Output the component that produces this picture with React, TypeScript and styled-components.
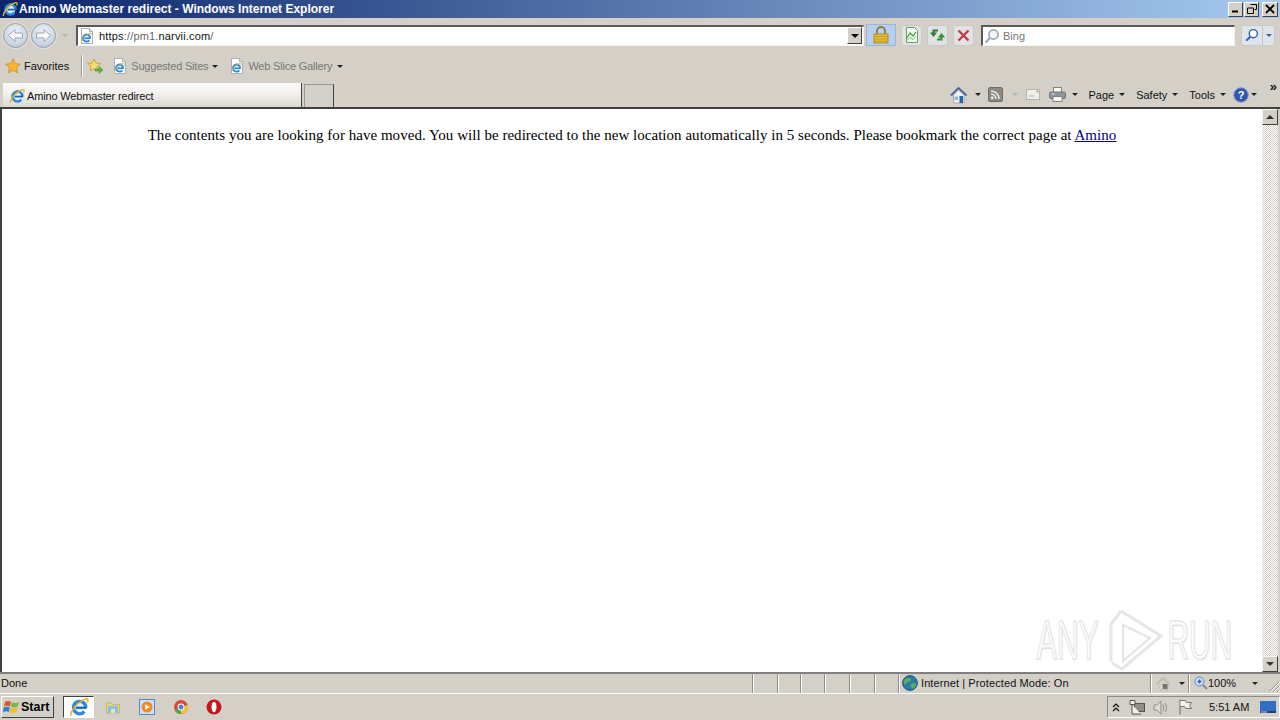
import React from 'react';
import styled, { createGlobalStyle } from 'styled-components';

const GlobalStyle = createGlobalStyle`
  html, body {
    margin: 0;
    padding: 0;
    overflow: hidden;
    background: #d4d0c8;
  }
`;

const UI_FONT = `"Liberation Sans", Arial, sans-serif`;

const Screen = styled.div`
  width: 1280px;
  height: 720px;
  position: relative;
  overflow: hidden;
  display: flex;
  flex-direction: column;
  background: #d4d0c8;
  font-family: ${UI_FONT};
  font-size: 11px;
  color: #111;
`;

const TitleBar = styled.div`
  height: 18px;
  flex: none;
  display: flex;
  align-items: center;
  padding: 0 2px;
  gap: 1px;
  background: linear-gradient(90deg, #0a246a 0%, #a6caf0 100%);
`;

const TitleText = styled.div`
  flex: 1;
  color: #fff;
  font-weight: bold;
  font-size: 12px;
  white-space: nowrap;
`;

const WinControls = styled.div`
  display: flex;
`;

const WinButton = styled.div<{ $w?: number; $gap?: number }>`
  width: ${(p) => p.$w ?? 15}px;
  height: 15px;
  margin-left: ${(p) => p.$gap ?? 0}px;
  box-sizing: border-box;
  background: #d4d0c8;
  border: 1px solid;
  border-color: #fff #404040 #404040 #fff;
  display: flex;
  align-items: center;
  justify-content: center;
`;

const AddressRow = styled.div`
  height: 34px;
  flex: none;
  display: flex;
  align-items: center;
  padding-left: 3px;
`;

const NavCircle = styled.div<{ $gap?: number }>`
  width: 25px;
  height: 25px;
  margin-left: ${(p) => p.$gap ?? 0}px;
  border-radius: 50%;
  box-sizing: border-box;
  border: 1px solid #98a0aa;
  background: radial-gradient(circle at 50% 35%, #eef2f6 0%, #cdd8e4 60%, #a9bacc 100%);
  box-shadow: 0 0 0 1px #e4e2dc;
  display: flex;
  align-items: center;
  justify-content: center;
`;

const AddressBox = styled.div`
  width: 788px;
  height: 21px;
  margin-left: 8px;
  box-sizing: border-box;
  background: #fff;
  border: 1px solid;
  border-color: #5a5a5a #f4f3ef #f4f3ef #5a5a5a;
  border-top-width: 2px;
  border-left-width: 2px;
  display: flex;
  align-items: center;
`;

const AddressText = styled.div`
  flex: 1;
  margin-left: 4px;
  color: #666;
  font-size: 11px;
  letter-spacing: 0.17px;
  b {
    font-weight: normal;
    color: #111;
  }
`;

const ComboButton = styled.div`
  width: 15px;
  height: 17px;
  margin-right: 1px;
  box-sizing: border-box;
  background: #d4d0c8;
  border: 1px solid;
  border-color: #fff #404040 #404040 #fff;
  display: flex;
  align-items: center;
  justify-content: center;
`;

const LockButton = styled.div`
  width: 30px;
  height: 22px;
  margin-left: 2px;
  box-sizing: border-box;
  background: #b5d0f0;
  border: 1px solid #9cb6d6;
  display: flex;
  align-items: center;
  justify-content: center;
`;

const SquareButton = styled.div<{ $gap: number }>`
  width: 21px;
  height: 21px;
  margin-left: ${(p) => p.$gap}px;
  box-sizing: border-box;
  border-radius: 3px;
  background: #e0e3e2;
  border: 1px solid #c8cac8;
  display: flex;
  align-items: center;
  justify-content: center;
`;

const SearchBox = styled(AddressBox)`
  width: 254px;
  margin-left: 7px;
`;

const SearchPlaceholder = styled.div`
  margin-left: 3px;
  color: #777;
  font-size: 11px;
`;

const SearchGo = styled.div`
  margin-left: 6px;
  width: 34px;
  height: 21px;
  box-sizing: border-box;
  border-radius: 3px;
  background: #dfe3ea;
  border: 1px solid #c8cac8;
  display: flex;
  align-items: center;
`;

const SearchGoIcon = styled.div`
  width: 20px;
  height: 100%;
  border-right: 1px solid #c4c6c8;
  display: flex;
  align-items: center;
  justify-content: center;
`;

const SearchGoCaret = styled.div`
  flex: 1;
  display: flex;
  justify-content: center;
`;

const FavoritesRow = styled.div`
  height: 30px;
  flex: none;
  box-sizing: border-box;
  display: flex;
  align-items: center;
  padding: 0 0 2px 5px;
`;

const ToolLabel = styled.span<{ $muted?: boolean; $gap?: number }>`
  margin-left: ${(p) => p.$gap ?? 0}px;
  color: ${(p) => (p.$muted ? '#777' : '#111')};
  letter-spacing: ${(p) => (p.$muted ? '-0.2px' : '0')};
  white-space: nowrap;
`;

const StatusLabel = styled(ToolLabel)`
  letter-spacing: 0.1px;
`;

const Divider = styled.div`
  width: 1px;
  height: 22px;
  margin: 0 5px 0 12px;
  background: #9c9a94;
  box-shadow: 1px 0 0 #fff;
`;

const Caret = styled.span<{ $gap?: number; $color?: string; $size?: number }>`
  display: inline-block;
  flex: none;
  width: 0;
  height: 0;
  margin-left: ${(p) => p.$gap ?? 0}px;
  border-left: ${(p) => p.$size ?? 3}px solid transparent;
  border-right: ${(p) => p.$size ?? 3}px solid transparent;
  border-top: ${(p) => p.$size ?? 3}px solid ${(p) => p.$color ?? '#222'};
`;

const Slot = styled.span<{ $gap?: number }>`
  display: inline-flex;
  flex: none;
  margin-left: ${(p) => p.$gap ?? 0}px;
`;

const TabRow = styled.div`
  height: 27px;
  flex: none;
  box-sizing: border-box;
  display: flex;
  align-items: stretch;
  padding-left: 3px;
  border-bottom: 2px solid #404040;
`;

const ActiveTab = styled.div`
  width: 299px;
  box-sizing: border-box;
  margin-top: 1px;
  padding: 1px 0 0 6px;
  display: flex;
  align-items: center;
  gap: 2px;
  background: linear-gradient(180deg, #fbfaf8 0%, #f3f1ed 45%, #dcd8d1 100%);
  border-right: 1px solid #404040;
`;

const TabLabel = styled.span`
  letter-spacing: -0.15px;
`;

const NewTab = styled.div`
  width: 30px;
  margin: 2px 0 0 2px;
  box-sizing: border-box;
  border: 1px solid #9a9892;
  border-right: 1px solid #404040;
  border-bottom: none;
`;

const CommandBar = styled.div`
  flex: 1;
  display: flex;
  align-items: center;
  justify-content: flex-end;
  position: relative;
  padding-right: 23px;
`;

const Chevron = styled.span`
  position: absolute;
  right: 3px;
  top: 0;
  font-size: 13px;
  font-weight: bold;
  line-height: 10px;
`;

const Body = styled.div`
  flex: 1;
  min-height: 0;
  display: flex;
  background: #fff;
  border-left: 2px solid #404040;
  border-right: 2px solid #d4d0c8;
  position: relative;
`;

const Page = styled.div`
  flex: 1;
  font-family: "Liberation Serif", "Times New Roman", serif;
  font-size: 15px;
  letter-spacing: 0.033px;
  color: #000;
  text-align: center;
  padding-top: 17px;
  line-height: 18px;
  a {
    color: #00008b;
    text-decoration: underline;
  }
`;

const Scrollbar = styled.div`
  width: 16px;
  flex: none;
  display: flex;
  flex-direction: column;
  justify-content: space-between;
  background: repeating-conic-gradient(#d4d0c8 0 25%, #fff 0 50%) 0 0 / 2px 2px;
`;

const ScrollButton = styled.div`
  height: 16px;
  box-sizing: border-box;
  background: #d4d0c8;
  border: 1px solid;
  border-color: #f4f3ef #404040 #404040 #f4f3ef;
  display: flex;
  align-items: center;
  justify-content: center;
`;

const UpCaret = styled.span`
  width: 0;
  height: 0;
  border-left: 4px solid transparent;
  border-right: 4px solid transparent;
  border-bottom: 4px solid #333;
`;

const DownCaret = styled.span`
  width: 0;
  height: 0;
  border-left: 4px solid transparent;
  border-right: 4px solid transparent;
  border-top: 4px solid #333;
`;

const Watermark = styled.div`
  position: absolute;
  right: 46px;
  bottom: 2px;
  display: flex;
  align-items: center;
  gap: 4px;
  pointer-events: none;
`;

const WatermarkText = styled.span<{ $squeeze: number; $scale: number }>`
  font-family: "Liberation Sans", Arial, sans-serif;
  font-size: 56px;
  line-height: 60px;
  margin: 0 -${(p) => p.$squeeze}px;
  transform: scaleX(${(p) => p.$scale});
  color: #fcfcfc;
  -webkit-text-stroke: 1px #dedede;
  text-shadow: 2px 1px 2px #e8e8e8;
  white-space: nowrap;
`;

const StatusBar = styled.div`
  height: 22px;
  flex: none;
  box-sizing: border-box;
  display: flex;
  align-items: center;
  border-top: 2px solid #808080;
  border-bottom: 1px solid #fff;
`;

const StatusText = styled.div`
  width: 752px;
  box-sizing: border-box;
  padding: 0 0 1px 1px;
  flex: none;
`;

const StatusCell = styled.div<{ $w: number }>`
  width: ${(p) => p.$w}px;
  height: 100%;
  box-sizing: border-box;
  flex: none;
  display: flex;
  align-items: center;
  padding-bottom: 1px;
  border-left: 1px solid #8e8c86;
  box-shadow: inset 1px 0 0 #fff;
`;

const Grip = styled.div`
  flex: 1;
  height: 100%;
  display: flex;
  align-items: flex-end;
  justify-content: flex-end;
`;

const Taskbar = styled.div`
  height: 26px;
  flex: none;
  display: flex;
  align-items: center;
  padding-left: 1px;
`;

const StartButton = styled.div`
  width: 53px;
  height: 22px;
  box-sizing: border-box;
  background: #d4d0c8;
  border: 1px solid;
  border-color: #fff #404040 #404040 #fff;
  display: flex;
  align-items: center;
  padding-left: 1px;
  gap: 0;
  font-size: 12.5px;
  font-weight: bold;
  color: #000;
`;

const TaskItem = styled.div<{ $active?: boolean; $gap: number }>`
  width: ${(p) => (p.$active ? 31 : 22)}px;
  height: 22px;
  margin-left: ${(p) => p.$gap}px;
  box-sizing: border-box;
  display: flex;
  align-items: center;
  justify-content: center;
  ${(p) =>
    p.$active &&
    `
    background: #fff;
    border: 1px solid;
    border-color: #404040 #fff #fff #404040;
  `}
`;

const Tray = styled.div`
  margin-left: auto;
  width: 173px;
  height: 22px;
  box-sizing: border-box;
  border: 1px solid;
  border-color: #8e8c86 #fff #fff #8e8c86;
  display: flex;
  align-items: center;
  padding-left: 4px;
`;

const Clock = styled.span`
  margin-left: 16px;
  font-size: 11px;
  color: #111;
  white-space: nowrap;
`;

const IeShape = () => (
  <g>
    <path d="M13.5 8.5A5 5 0 1 0 12.3 11.7" fill="#e6f3ff" stroke="#2b8ae0" strokeWidth="2.6" />
    <rect x="5.5" y="7.7" width="8.5" height="1.8" fill="#1766b8" />
    <path d="M1.4 15C1 11.500 7 3.600 13.600 1.600c2-.4 1.600 1.600 1 3" fill="none" stroke="#e8b130" strokeWidth="1.300" />
  </g>
);

const IeLogo = ({ size = 16 }: { size?: number }) => (
  <svg width={size} height={size} viewBox="0 0 16 16">
    <IeShape />
  </svg>
);

const PageGlyph = () => (
  <svg width="16" height="16" viewBox="0 0 16 16">
    <path d="M2.500 .5h8l3 3v12h-11z" fill="#fff" stroke="#a9aeb4" />
    <path d="M10.500 .5v3h3" fill="#dfe4ea" stroke="#a9aeb4" />
    <g transform="translate(1.500 4) scale(.72)">
      <IeShape />
    </g>
  </svg>
);

const Arrow = ({ flip }: { flip?: boolean }) => (
  <svg width="17" height="15" viewBox="0 0 17 15" style={flip ? { transform: 'scaleX(-1)' } : undefined}>
    <path d="M8 1.500 1.500 7.500 8 13.500V10h7.500V5H8z" fill="#f8f9fa" stroke="#9aa6b3" />
  </svg>
);

const Star = ({ size = 16 }: { size?: number }) => (
  <svg width={size} height={size} viewBox="0 0 16 16">
    <path d="M8 .8l2.200 4.800 5.200.6-3.900 3.500 1.100 5.200L8 12.200l-4.600 2.700 1.100-5.200L.6 6.200l5.200-.6z" fill="#f7b733" stroke="#d08d1a" strokeWidth=".8" />
  </svg>
);

const AddFavorite = () => (
  <svg width="17" height="16" viewBox="0 0 17 16">
    <path d="M7 1l1.900 4 4.500.5-3.400 3 1 4.500L7 10.600l-4 2.400 1-4.500-3.400-3 4.500-.5z" fill="#f3dc70" stroke="#bb9a2a" strokeWidth=".8" />
    <path d="M8 11h4V8.500l4 3.500-4 3.500V13H8z" fill="#58b947" stroke="#3a8a2f" strokeWidth=".5" />
  </svg>
);

const Lock = () => (
  <svg width="16" height="18" viewBox="0 0 16 18">
    <path d="M4 8V5a4 4 0 018 0v3" fill="none" stroke="#8f7c3c" strokeWidth="1.800" />
    <rect x="1" y="8" width="14" height="9" fill="#e8bd35" stroke="#b08c26" />
    <path d="M1 10.500h14M1 13h14M1 15.300h14" stroke="#b8901f" strokeWidth=".7" />
  </svg>
);

const CompatPage = () => (
  <svg width="14" height="16" viewBox="0 0 14 16">
    <path d="M1.500.5h8l3 3v12h-11z" fill="#f2f8ee" stroke="#69a35e" />
    <path d="M2 11l3-5 3 3 3-4" fill="none" stroke="#3d9a41" strokeWidth="1.200" />
    <path d="M2 13.500l3-3 3 2 3-3" fill="none" stroke="#7cbf75" />
  </svg>
);

const RefreshArrows = () => (
  <svg width="17" height="14" viewBox="0 0 17 14">
    <path d="M9 2.500H4.500V5" fill="none" stroke="#2b7a36" strokeWidth="2" />
    <path d="M1 4.500h7l-3.500 4.500z" fill="#2b7a36" />
    <path d="M8 11.500h4.500V9" fill="none" stroke="#2f8f3a" strokeWidth="2" />
    <path d="M9 9.500h7l-3.500-4.500z" fill="#2f8f3a" />
  </svg>
);

const StopX = () => (
  <svg width="13" height="13" viewBox="0 0 13 13">
    <path d="M1.500 1.500l10 10M11.500 1.500l-10 10" stroke="#bf4046" strokeWidth="2.400" />
  </svg>
);

const Magnifier = ({ color = '#9aa7b5', size = 16 }: { color?: string; size?: number }) => (
  <svg width={size} height={size} viewBox="0 0 16 16">
    <circle cx="9.500" cy="6.500" r="4.600" fill={color === '#9aa7b5' ? '#f4f7fa' : '#fff'} stroke={color} strokeWidth="1.600" />
    <path d="M6 10L1.500 14.500" stroke={color} strokeWidth="2.200" />
  </svg>
);

const Home = () => (
  <svg width="18" height="18" viewBox="0 0 18 18">
    <path d="M1 9.500L8.500 2 16.500 9.500" fill="none" stroke="#41679c" strokeWidth="1.800" />
    <path d="M3.500 9l5-5L14 9v8H3.500z" fill="#f2f0ea" stroke="#8e969e" strokeWidth=".7" />
    <rect x="9.500" y="10" width="3.500" height="7" fill="#1f66ad" />
    <rect x="4.500" y="10.500" width="3.500" height="3.500" fill="#8db8e0" />
  </svg>
);

const Feed = () => (
  <svg width="15" height="15" viewBox="0 0 15 15">
    <rect x=".5" y=".5" width="14" height="14" rx="1.500" fill="#8a8a84" stroke="#6f6f6a" />
    <circle cx="4.200" cy="11" r="1.400" fill="#eee" />
    <path d="M3 7a5 5 0 015 5M3 4a8 8 0 018 8" fill="none" stroke="#eee" strokeWidth="1.400" />
  </svg>
);

const Mail = () => (
  <svg width="14" height="11" viewBox="0 0 14 11">
    <rect x=".5" y=".5" width="13" height="10" fill="#eeeeea" stroke="#b5b3ad" />
    <path d="M3 7h5" stroke="#b0aea8" />
    <rect x="10.500" y="1.500" width="2" height="2" fill="#d08a80" />
  </svg>
);

const Printer = () => (
  <svg width="17" height="15" viewBox="0 0 17 15">
    <rect x="4.500" y=".5" width="8" height="5" fill="#f7f7f4" stroke="#84827c" />
    <rect x=".5" y="5" width="16" height="6.500" rx="1.500" fill="#8d949c" stroke="#6d727a" />
    <rect x="4" y="9.500" width="9" height="5" fill="#f7f7f4" stroke="#84827c" />
    <path d="M2.500 7h3" stroke="#e2e6ea" />
  </svg>
);

const Help = () => (
  <svg width="16" height="16" viewBox="0 0 16 16">
    <circle cx="8" cy="8" r="7.200" fill="#2f55b5" stroke="#7d8fc5" />
    <text x="8" y="12" textAnchor="middle" fontSize="11" fontWeight="bold" fontFamily="Liberation Sans" fill="#fff">?</text>
  </svg>
);

const Globe = () => (
  <svg width="16" height="16" viewBox="0 0 16 16">
    <circle cx="8" cy="8" r="7.400" fill="#2e79a8" stroke="#1d5a80" />
    <path d="M3 4c2-1.500 5-1.500 6 0s-2 3-3.500 3-1 3-2.500 2.500S1.500 6 3 4zM9 9c2-1 4.500-1 5 .5s-2 4.500-3.500 4S8 10 9 9z" fill="#58b05c" />
  </svg>
);

const ProtectedLock = () => (
  <svg width="17" height="15" viewBox="0 0 17 15">
    <path d="M1 8l6-6 6 6" fill="none" stroke="#b9b8b2" strokeWidth="1.600" />
    <path d="M4 8v6h8V8" fill="#e4e2dc" stroke="#b9b8b2" />
    <rect x="6.500" y="8" width="5" height="5" fill="#77756f" />
  </svg>
);

const ZoomGlass = () => (
  <svg width="14" height="14" viewBox="0 0 14 14">
    <circle cx="5.500" cy="5.500" r="4.500" fill="#cfe0f5" stroke="#5a86c0" />
    <path d="M3.500 5.500h4M5.500 3.500v4" stroke="#2a62b0" strokeWidth="1.500" />
    <path d="M9 9l4 4" stroke="#8a8880" strokeWidth="1.800" />
  </svg>
);

const GripLines = () => (
  <svg width="12" height="12" viewBox="0 0 12 12">
    <path d="M11 1L1 11M11 5L5 11M11 9l-2 2" stroke="#8e8c86" />
    <path d="M12 1L2 11M12 5L6 11M12 9l-2 2" stroke="#fff" />
  </svg>
);

const WindowsFlag = () => (
  <svg width="18" height="18" viewBox="0 0 18 16">
    <path d="M2 3c2-1.200 4-1.200 6 0l-1 4.500C5 6.500 3 6.500 1 7.500z" fill="#e2552b" />
    <path d="M9 3.200c2 1 4 1 7 0l-1.200 4.500c-2.500 1-4.500 1-7 0z" fill="#7cb93e" />
    <path d="M.8 8.500c2-1 4-1 6 0l-1 4.500c-2-1-4-1-6 0z" fill="#2f7fd0" />
    <path d="M7.700 8.800c2.300 1 4.300 1 6.800 0L13.500 13.300c-2.500 1-4.500 1-7 0z" fill="#f2bd2c" />
  </svg>
);

const Explorer = () => (
  <svg width="16" height="16" viewBox="0 0 16 16">
    <path d="M1.500 4h5l1 1.500h7V14h-13z" fill="#e8d57a" stroke="#b8a650" strokeWidth=".6" />
    <path d="M3 7h10v7H3z" fill="#8cc0e0" />
    <path d="M6 14v-4h4v4z" fill="#e8e4c8" />
  </svg>
);

const MediaPlayer = () => (
  <svg width="16" height="16" viewBox="0 0 16 16">
    <rect x=".5" y=".5" width="15" height="15" fill="#cfe0f5" stroke="#4a8bd0" />
    <circle cx="8" cy="8" r="5.500" fill="#f08a1d" />
    <path d="M6.200 5.200v5.600L11 8z" fill="#fff" />
  </svg>
);

const Chrome = () => (
  <svg width="16" height="16" viewBox="0 0 16 16">
    <circle cx="8" cy="8" r="7" fill="#d9493a" />
    <path d="M8 8L1.900 11.500A7 7 0 008 15z" fill="#4aa84f" />
    <path d="M8 8v7a7 7 0 006.700-9z" fill="#f3c52f" />
    <circle cx="8" cy="8" r="3.400" fill="#fff" />
    <circle cx="8" cy="8" r="2.500" fill="#4a80d8" />
  </svg>
);

const Opera = () => (
  <svg width="16" height="16" viewBox="0 0 16 16">
    <circle cx="8" cy="8" r="7.500" fill="#c8141c" />
    <ellipse cx="8" cy="8" rx="2.500" ry="5.300" fill="#fff" />
  </svg>
);

const TrayUp = () => (
  <svg width="8" height="9" viewBox="0 0 8 9">
    <path d="M1 4l3-3 3 3M1 8l3-3 3 3" fill="none" stroke="#111" strokeWidth="1.200" />
  </svg>
);

const Network = () => (
  <svg width="17" height="17" viewBox="0 0 17 17">
    <rect x="5.500" y="4.500" width="10" height="8" fill="#8f8d87" stroke="#55544f" />
    <path d="M1 1.500h5v4H1zM3 5.500V15h9" fill="#f0eee6" stroke="#55544f" />
  </svg>
);

const Speaker = () => (
  <svg width="16" height="15" viewBox="0 0 16 15">
    <path d="M1 5h3l4-4v13l-4-4H1z" fill="#dcdad4" stroke="#8e8c86" />
    <path d="M10 4.500c1 2 1 4 0 6M12 3c2 3 2 6 0 9" fill="none" stroke="#8e8c86" />
  </svg>
);

const Flag = () => (
  <svg width="15" height="16" viewBox="0 0 15 16">
    <path d="M2 .5v15" stroke="#77756f" strokeWidth="1.200" />
    <path d="M2.500 1.500h5l1 2h5l-2 3 2 3h-6l-1-2h-4" fill="#f2f0ea" stroke="#77756f" />
  </svg>
);

const ShowDesktop = () => (
  <svg width="16" height="15" viewBox="0 0 16 15">
    <rect width="16" height="12" y="1" fill="#2f6fc0" />
    <rect width="16" height="2" y="11" fill="#1b3f78" />
    <rect width="6" height="1" x="1" y="11.500" fill="#c8d8f0" />
  </svg>
);

const WatermarkLogo = () => (
  <svg width="60" height="60" viewBox="0 0 60 60">
    <path d="M18 1L58 26 19 59 9 53" fill="none" stroke="#e6e6e6" strokeWidth="3" />
    <path d="M8 14v38M18 1L8 14" fill="none" stroke="#e6e6e6" strokeWidth="3" />
    <path d="M20 15l27 13-27 23z" fill="#fdfdfd" stroke="#e4e4e4" strokeWidth="2" />
  </svg>
);

function App() {
  return (
    <Screen>
      <GlobalStyle />
      <TitleBar>
        <IeLogo />
        <TitleText>Amino Webmaster redirect - Windows Internet Explorer</TitleText>
        <WinControls>
          <WinButton>
            <svg width="8" height="8" viewBox="0 0 8 8"><path d="M0 6.500h6" stroke="#000" strokeWidth="2" /></svg>
          </WinButton>
          <WinButton $gap={1}>
            <svg width="10" height="10" viewBox="0 0 10 10"><path d="M3.500.5h6v5h-2M.5 4h6v5.500h-6z" fill="none" stroke="#000" /></svg>
          </WinButton>
          <WinButton $w={16} $gap={3}>
            <svg width="10" height="10" viewBox="0 0 10 10"><path d="M1 1l8 8M9 1l-8 8" stroke="#000" strokeWidth="1.800" /></svg>
          </WinButton>
        </WinControls>
      </TitleBar>

      <AddressRow>
        <NavCircle><Arrow /></NavCircle>
        <NavCircle $gap={3}><Arrow flip /></NavCircle>
        <Caret $gap={6} $color="#b5b3ad" />
        <AddressBox>
          <Slot $gap={1}><PageGlyph /></Slot>
          <AddressText><b>https</b>://pm1.<b>narvii.com</b>/</AddressText>
          <ComboButton><Caret $size={4} $color="#000" /></ComboButton>
        </AddressBox>
        <LockButton><Lock /></LockButton>
        <SquareButton $gap={5}><CompatPage /></SquareButton>
        <SquareButton $gap={5}><RefreshArrows /></SquareButton>
        <SquareButton $gap={5}><StopX /></SquareButton>
        <SearchBox>
          <Slot $gap={1}><Magnifier /></Slot>
          <SearchPlaceholder>Bing</SearchPlaceholder>
        </SearchBox>
        <SearchGo>
          <SearchGoIcon><Magnifier color="#2d5fb0" size={14} /></SearchGoIcon>
          <SearchGoCaret><Caret $color="#3a5f9a" /></SearchGoCaret>
        </SearchGo>
      </AddressRow>

      <FavoritesRow>
        <Star />
        <ToolLabel $gap={3}>Favorites</ToolLabel>
        <Divider />
        <AddFavorite />
        <Slot $gap={8}><PageGlyph /></Slot>
        <ToolLabel $muted $gap={3}>Suggested Sites</ToolLabel>
        <Caret $gap={4} />
        <Slot $gap={11}><PageGlyph /></Slot>
        <ToolLabel $muted $gap={3}>Web Slice Gallery</ToolLabel>
        <Caret $gap={5} />
      </FavoritesRow>

      <TabRow>
        <ActiveTab>
          <IeLogo />
          <TabLabel>Amino Webmaster redirect</TabLabel>
        </ActiveTab>
        <NewTab />
        <CommandBar>
          <Home />
          <Caret $gap={7} />
          <Slot $gap={7}><Feed /></Slot>
          <Caret $gap={9} $color="#b5b3ad" />
          <Slot $gap={8}><Mail /></Slot>
          <Slot $gap={9}><Printer /></Slot>
          <Caret $gap={6} />
          <ToolLabel $gap={10}>Page</ToolLabel>
          <Caret $gap={5} />
          <ToolLabel $gap={11}>Safety</ToolLabel>
          <Caret $gap={5} />
          <ToolLabel $gap={11}>Tools</ToolLabel>
          <Caret $gap={5} />
          <Slot $gap={7}><Help /></Slot>
          <Caret $gap={2} />
          <Chevron>»</Chevron>
        </CommandBar>
      </TabRow>

      <Body>
        <Page>
          The contents you are looking for have moved. You will be redirected to the new location automatically in 5 seconds. Please bookmark the correct page at <a href="#amino">Amino</a>
        </Page>
        <Scrollbar>
          <ScrollButton><UpCaret /></ScrollButton>
          <ScrollButton><DownCaret /></ScrollButton>
        </Scrollbar>
        <Watermark>
          <WatermarkText $squeeze={26} $scale={0.54}>ANY</WatermarkText>
          <WatermarkLogo />
          <WatermarkText $squeeze={28} $scale={0.53}>RUN</WatermarkText>
        </Watermark>
      </Body>

      <StatusBar>
        <StatusText>Done</StatusText>
        <StatusCell $w={25} />
        <StatusCell $w={23} />
        <StatusCell $w={24} />
        <StatusCell $w={25} />
        <StatusCell $w={25} />
        <StatusCell $w={24} />
        <StatusCell $w={252}>
          <Slot $gap={3}><Globe /></Slot>
          <StatusLabel $gap={3}>Internet | Protected Mode: On</StatusLabel>
        </StatusCell>
        <StatusCell $w={38}>
          <Slot $gap={5}><ProtectedLock /></Slot>
          <Caret $gap={6} />
        </StatusCell>
        <StatusCell $w={77}>
          <Slot $gap={5}><ZoomGlass /></Slot>
          <ToolLabel>100%</ToolLabel>
          <Caret $gap={16} />
        </StatusCell>
        <Grip><GripLines /></Grip>
      </StatusBar>

      <Taskbar>
        <StartButton><WindowsFlag />Start</StartButton>
        <TaskItem $active $gap={9}><IeLogo size={20} /></TaskItem>
        <TaskItem $gap={8}><Explorer /></TaskItem>
        <TaskItem $gap={12}><MediaPlayer /></TaskItem>
        <TaskItem $gap={12}><Chrome /></TaskItem>
        <TaskItem $gap={11}><Opera /></TaskItem>
        <Tray>
          <TrayUp />
          <Slot $gap={9}><Network /></Slot>
          <Slot $gap={7}><Speaker /></Slot>
          <Slot $gap={9}><Flag /></Slot>
          <Clock>5:51 AM</Clock>
          <Slot $gap={11}><ShowDesktop /></Slot>
        </Tray>
      </Taskbar>
    </Screen>
  );
}

export default App;
